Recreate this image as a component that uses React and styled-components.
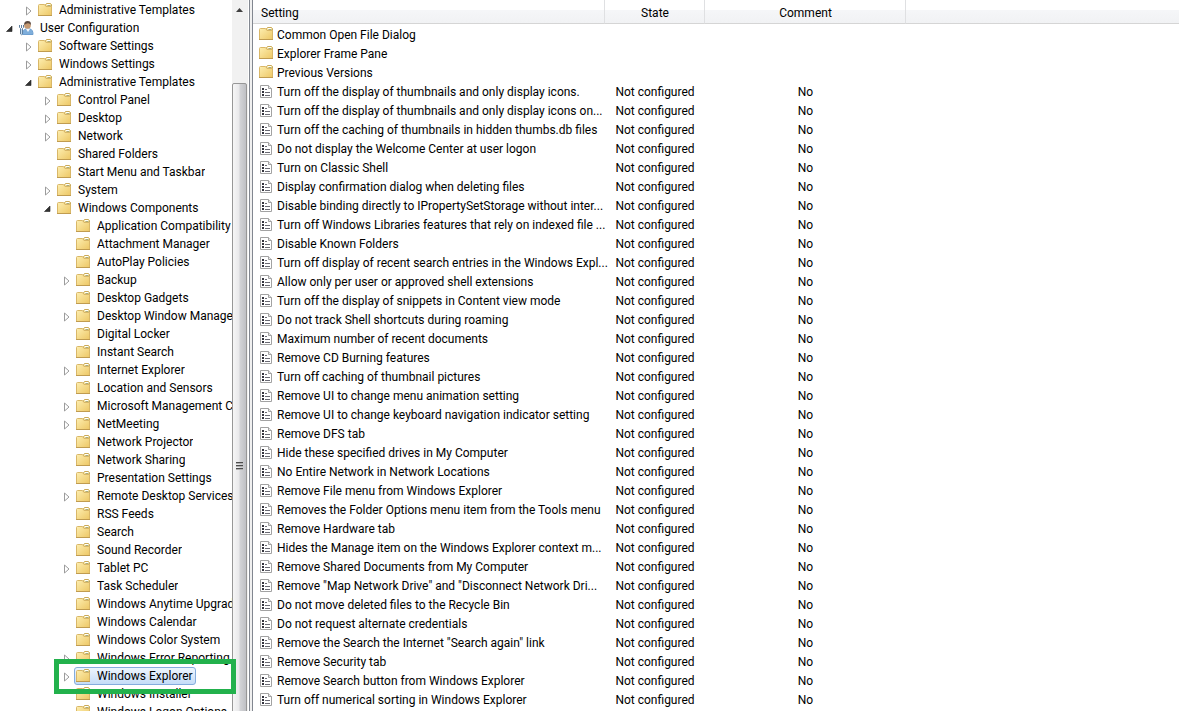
import React, { useState } from 'react'
import styled, { createGlobalStyle, css } from 'styled-components'

const GlobalStyle = createGlobalStyle`
    * {
        box-sizing: border-box;
    }
    body {
        margin: 0;
        background: #fff;
        color: #000;
        font-family: Roboto, "Open Sans", sans-serif;
        font-size: 12px;
    }
`
const Window = styled.div`
    display: flex;
    height: 100vh;
    overflow: hidden;
`
const TreePane = styled.nav`
    flex: none;
    width: 232px;
    padding-top: 1px;
`
const TreeRow = styled.div`
    position: relative;
    display: flex;
    align-items: center;
    height: 18px;
    padding-left: ${({ $level }) => $level * 19}px;
`
const Toggle = styled.button`
    flex: none;
    display: flex;
    align-items: center;
    justify-content: center;
    width: 17px;
    height: 18px;
    padding: 2px 0 0 2px;
    border: none;
    background: transparent;
`
const ToggleSpace = styled.span`
    flex: none;
    width: 17px;
`
const TreeLabel = styled.button`
    display: flex;
    align-items: center;
    gap: 6px;
    min-width: 0;
    height: 18px;
    margin-right: -3px;
    padding: 0 2px 0 0;
    border: 1px solid transparent;
    border-radius: 3px;
    background: transparent;
    color: inherit;
    font: inherit;
    line-height: 16px;
    text-align: left;

    ${({ $selected }) => $selected && css`
        border-color: #84acdd;
        background: linear-gradient(#eef5fd, #c5dcf7);
    `}
`
const LabelText = styled.span`
    overflow: hidden;
    white-space: nowrap;
`
const Highlight = styled.div`
    position: absolute;
    z-index: 1;
    top: -8px;
    right: -4px;
    bottom: -9px;
    left: 54px;
    border: 5px solid #22b14c;
    pointer-events: none;
`
const ScrollTrack = styled.div`
    flex: none;
    display: flex;
    flex-direction: column;
    width: 15px;
    background: #f1f1f1;
`
const ScrollButton = styled.button`
    flex: none;
    display: flex;
    align-items: center;
    justify-content: center;
    height: 20px;
    margin-bottom: 63px;
    padding: 0;
    border: none;
    background: transparent;
`
const ScrollThumb = styled.div`
    flex: none;
    display: flex;
    flex-direction: column;
    align-items: center;
    justify-content: center;
    gap: 1px;
    height: 766px;
    border: 1px solid #979797;
    border-radius: 2px;
    background: linear-gradient(90deg, #f6f6f6, #e9e9eb 45%, #d2d3d6 55%, #bfc0c4);
`
const Grip = styled.span`
    width: 7px;
    height: 2px;
    border-top: 1px solid #4c4c4c;
    background: #b0b0b0;
`
const Splitter = styled.div`
    flex: none;
    width: 6px;
    border-right: 1px solid #828790;
    border-left: 1px solid #f0f0f0;
    background: #f0f0f0;
    box-shadow: inset 1px 0 #fff, inset 2px 0 #828790;
`
const ListPane = styled.main`
    flex: 1;
    min-width: 0;
    overflow: hidden;
`
const SettingsTable = styled.table`
    width: 100%;
    table-layout: fixed;
    border-collapse: separate;
    border-spacing: 0;
`
const Column = styled.col`
    width: ${({ $width }) => $width};
`
const HeaderCell = styled.th`
    height: 24px;
    padding: 3px 7px 0 8px;
    border-right: ${({ $last }) => ($last ? 'none' : '1px solid #dfe0e2')};
    border-bottom: 1px solid #d5d5d5;
    background: linear-gradient(#fff 45%, #f5f6f8 45%, #f1f2f4);
    font-weight: normal;
    line-height: 18px;
    text-align: ${({ $align }) => $align || 'center'};
`
const Spacer = styled.tr`
    height: 2px;
`
const Cell = styled.td`
    height: 19px;
    padding: 0;
    line-height: 19px;
    text-align: center;
    white-space: nowrap;
`
const SettingName = styled.div`
    display: flex;
    align-items: flex-start;
    gap: 3px;
    height: 19px;
    padding-left: 5px;
`
const Icon = styled.svg`
    flex: none;
    display: block;
`

const FolderIcon = () => (
    <Icon width="16" height="16" viewBox="0 0 16 16">
        <defs>
            <linearGradient id="folder" x1="0" y1="0" x2="1" y2="1">
                <stop offset="0" stopColor="#fdeeb0" />
                <stop offset="1" stopColor="#edc765" />
            </linearGradient>
        </defs>
        <path d="M8.500 4.500V2.500l1-1h4l1 1v2z" fill="#f6e3a0" stroke="#c9a95a" />
        <path d="M10 2.500h3" stroke="#fff" />
        <path d="M1.500 3.500q0-1 1-1h5L9 4.500h5.500v9h-13z" fill="url(#folder)" stroke="#d9b768" />
        <path d="M10.500 3.500h3" stroke="#a9ad7c" />
        <path d="M1 13.500h14" stroke="#c09c50" />
    </Icon>
)

const UserIcon = () => (
    <Icon width="16" height="16" viewBox="0 0 16 16">
        <path d="M4.500 14.500q0-5 3.500-5.500h4q3 .5 3 5.500z" fill="#7eaedb" stroke="#6d9fd0" />
        <path d="M8 9l2 3 2-3z" fill="#f3f7fb" />
        <circle cx="9.500" cy="5.500" r="3.300" fill="#c79a72" />
        <path d="M6.200 5q-.3-4 3.500-4t3.100 4q-1-1.800-2.800-1.800T6.200 5z" fill="#5b4a40" />
        <path d="M1.500 5v2.500l1 1V14q1 1.500 2 0V8.500l1-1V5M3.500 5v3" fill="none" stroke="#5f7f9f" />
        <path d="M3.500 9v5" stroke="#c6dcf0" />
    </Icon>
)

const SettingIcon = () => (
    <Icon width="16" height="16" viewBox="-1 -1 16 16">
        <path d="M1.500 1.500h8l3 3v9h-11z" fill="#fff" stroke="#a2a2a2" />
        <path d="M9.500 1.500v3h3" fill="#e8e8e8" stroke="#a2a2a2" />
        <path d="M3 4h2v2H3zM3 7h2v2H3zM3 10h2v2H3z" fill="#33333d" />
        <path d="M6 5.500h2M6 8.500h5M6 11.500h5" stroke="#6a6a74" />
    </Icon>
)

const ToggleIcon = ({ open }) => (
    <Icon width="8" height="10" viewBox="0 0 8 10">
        {open
            ? <path d="M6 2v5.500H.5z" fill="#333" stroke="#222" strokeWidth=".6" />
            : <path d="M1.500 1L6 5 1.500 9z" fill="#fff" stroke="#9c9c9c" />}
    </Icon>
)

// state: 'open' expanded, 'closed' collapsed, none for a leaf
const treeItems = [
    { level: 1, name: 'Administrative Templates', state: 'closed' },
    { level: 0, name: 'User Configuration', state: 'open', user: true },
    { level: 1, name: 'Software Settings', state: 'closed' },
    { level: 1, name: 'Windows Settings', state: 'closed' },
    { level: 1, name: 'Administrative Templates', state: 'open' },
    { level: 2, name: 'Control Panel', state: 'closed' },
    { level: 2, name: 'Desktop', state: 'closed' },
    { level: 2, name: 'Network', state: 'closed' },
    { level: 2, name: 'Shared Folders' },
    { level: 2, name: 'Start Menu and Taskbar' },
    { level: 2, name: 'System', state: 'closed' },
    { level: 2, name: 'Windows Components', state: 'open' },
    { level: 3, name: 'Application Compatibility' },
    { level: 3, name: 'Attachment Manager' },
    { level: 3, name: 'AutoPlay Policies' },
    { level: 3, name: 'Backup', state: 'closed' },
    { level: 3, name: 'Desktop Gadgets' },
    { level: 3, name: 'Desktop Window Manager', state: 'closed' },
    { level: 3, name: 'Digital Locker' },
    { level: 3, name: 'Instant Search' },
    { level: 3, name: 'Internet Explorer', state: 'closed' },
    { level: 3, name: 'Location and Sensors' },
    { level: 3, name: 'Microsoft Management Console', state: 'closed' },
    { level: 3, name: 'NetMeeting', state: 'closed' },
    { level: 3, name: 'Network Projector' },
    { level: 3, name: 'Network Sharing' },
    { level: 3, name: 'Presentation Settings' },
    { level: 3, name: 'Remote Desktop Services', state: 'closed' },
    { level: 3, name: 'RSS Feeds' },
    { level: 3, name: 'Search' },
    { level: 3, name: 'Sound Recorder' },
    { level: 3, name: 'Tablet PC', state: 'closed' },
    { level: 3, name: 'Task Scheduler' },
    { level: 3, name: 'Windows Anytime Upgrade' },
    { level: 3, name: 'Windows Calendar' },
    { level: 3, name: 'Windows Color System' },
    { level: 3, name: 'Windows Error Reporting', state: 'closed' },
    { level: 3, name: 'Windows Explorer', state: 'closed', marked: true },
    { level: 3, name: 'Windows Installer' },
    { level: 3, name: 'Windows Logon Options' },
]

const folders = ['Common Open File Dialog', 'Explorer Frame Pane', 'Previous Versions']

const settings = [
    'Turn off the display of thumbnails and only display icons.',
    'Turn off the display of thumbnails and only display icons on...',
    'Turn off the caching of thumbnails in hidden thumbs.db files',
    'Do not display the Welcome Center at user logon',
    'Turn on Classic Shell',
    'Display confirmation dialog when deleting files',
    'Disable binding directly to IPropertySetStorage without inter...',
    'Turn off Windows Libraries features that rely on indexed file ...',
    'Disable Known Folders',
    'Turn off display of recent search entries in the Windows Expl...',
    'Allow only per user or approved shell extensions',
    'Turn off the display of snippets in Content view mode',
    'Do not track Shell shortcuts during roaming',
    'Maximum number of recent documents',
    'Remove CD Burning features',
    'Turn off caching of thumbnail pictures',
    'Remove UI to change menu animation setting',
    'Remove UI to change keyboard navigation indicator setting',
    'Remove DFS tab',
    'Hide these specified drives in My Computer',
    'No Entire Network in Network Locations',
    'Remove File menu from Windows Explorer',
    'Removes the Folder Options menu item from the Tools menu',
    'Remove Hardware tab',
    'Hides the Manage item on the Windows Explorer context m...',
    'Remove Shared Documents from My Computer',
    'Remove "Map Network Drive" and "Disconnect Network Dri...',
    'Do not move deleted files to the Recycle Bin',
    'Do not request alternate credentials',
    'Remove the Search the Internet "Search again" link',
    'Remove Security tab',
    'Remove Search button from Windows Explorer',
    'Turn off numerical sorting in Windows Explorer',
]

const App = () => {
    const [selected, setSelected] = useState('Windows Explorer')

    return (
        <Window>
            <GlobalStyle />
            <TreePane>
                {treeItems.map((item, i) => (
                    <TreeRow key={i} $level={item.level}>
                        {item.state
                            ? <Toggle aria-label={`Toggle ${item.name}`}><ToggleIcon open={item.state === 'open'} /></Toggle>
                            : <ToggleSpace />}
                        <TreeLabel $selected={item.name === selected} onClick={() => setSelected(item.name)}>
                            {item.user ? <UserIcon /> : <FolderIcon />}
                            <LabelText>{item.name}</LabelText>
                        </TreeLabel>
                        {item.marked && <Highlight />}
                    </TreeRow>
                ))}
            </TreePane>
            <ScrollTrack>
                <ScrollButton aria-label="Scroll up">
                    <Icon width="7" height="4" viewBox="0 0 7 4">
                        <path d="M0 4l3.500-4L7 4z" fill="#404040" />
                    </Icon>
                </ScrollButton>
                <ScrollThumb>
                    <Grip />
                    <Grip />
                    <Grip />
                </ScrollThumb>
            </ScrollTrack>
            <Splitter />
            <ListPane>
                <SettingsTable>
                    <colgroup>
                        <Column $width="352px" />
                        <Column $width="100px" />
                        <Column $width="201px" />
                        <Column $width="auto" />
                    </colgroup>
                    <thead>
                        <tr>
                            <HeaderCell $align="left">Setting</HeaderCell>
                            <HeaderCell>State</HeaderCell>
                            <HeaderCell>Comment</HeaderCell>
                            <HeaderCell $last />
                        </tr>
                    </thead>
                    <tbody>
                        <Spacer />
                        {folders.map((name) => (
                            <tr key={name}>
                                <Cell><SettingName><FolderIcon />{name}</SettingName></Cell>
                            </tr>
                        ))}
                        {settings.map((name) => (
                            <tr key={name}>
                                <Cell><SettingName><SettingIcon />{name}</SettingName></Cell>
                                <Cell>Not configured</Cell>
                                <Cell>No</Cell>
                            </tr>
                        ))}
                    </tbody>
                </SettingsTable>
            </ListPane>
        </Window>
    )
}

export default App
